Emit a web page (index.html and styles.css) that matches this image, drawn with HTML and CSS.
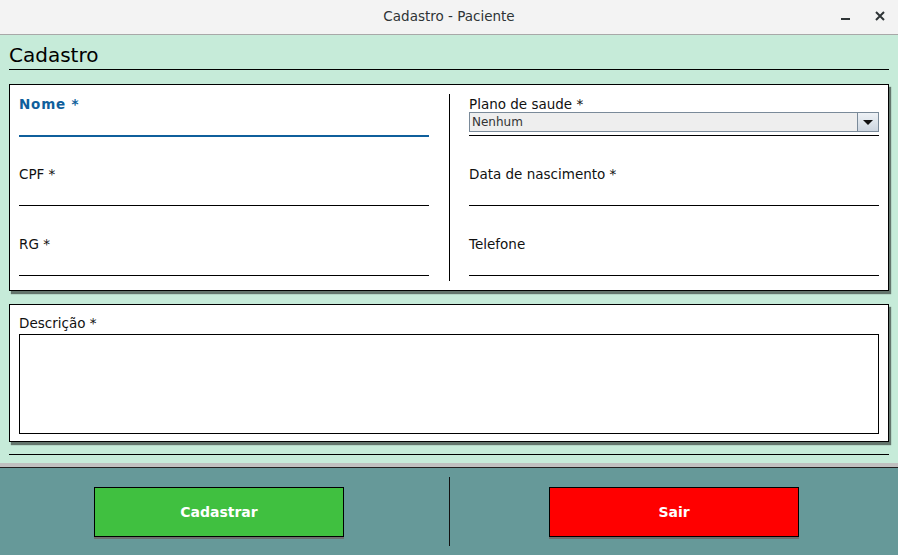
FILE: index.html
```html
<!DOCTYPE html>
<html lang="pt">
<head>
<meta charset="utf-8">
<title>Cadastro - Paciente</title>
<link rel="stylesheet" href="styles.css">
</head>
<body>
<div class="window">
  <header class="titlebar">
    <div class="tb-side"></div>
    <div class="tb-title">Cadastro - Paciente</div>
    <div class="tb-side tb-controls">
      <svg class="tb-btn" width="12" height="12" viewBox="0 0 12 12"><rect x="1" y="8" width="9" height="2" fill="#2e3436"/></svg>
      <svg class="tb-btn" width="12" height="12" viewBox="0 0 12 12"><path d="M2 2 L10 10 M10 2 L2 10" stroke="#2e3436" stroke-width="2" fill="none"/></svg>
    </div>
  </header>

  <main class="main">
    <h1 class="heading">Cadastro</h1>

    <section class="panel panel-fields">
      <div class="col">
        <div class="field">
          <div class="label label-focus">Nome *</div>
          <div class="input input-focus"></div>
        </div>
        <div class="field">
          <div class="label">CPF *</div>
          <div class="input"></div>
        </div>
        <div class="field">
          <div class="label">RG *</div>
          <div class="input"></div>
        </div>
      </div>
      <div class="vsep"></div>
      <div class="col">
        <div class="field">
          <div class="label">Plano de saude *</div>
          <div class="input input-combo">
            <div class="combo">
              <span class="combo-text">Nenhum</span>
              <span class="combo-arrow"><svg width="10" height="6" viewBox="0 0 10 6"><path d="M0 0 H10 L5 5 Z" fill="#111"/></svg></span>
            </div>
          </div>
        </div>
        <div class="field">
          <div class="label">Data de nascimento *</div>
          <div class="input"></div>
        </div>
        <div class="field">
          <div class="label">Telefone</div>
          <div class="input"></div>
        </div>
      </div>
    </section>

    <section class="panel panel-desc">
      <div class="label">Descrição *</div>
      <div class="textarea"></div>
    </section>

    <div class="hline"></div>
  </main>

  <footer class="footer">
    <button class="btn btn-green">Cadastrar</button>
    <div class="fsep"></div>
    <button class="btn btn-red">Sair</button>
  </footer>
</div>
</body>
</html>
```

FILE: styles.css
```css
* { box-sizing: border-box; }
html, body { margin: 0; padding: 0; }
body {
  width: 898px;
  height: 555px;
  overflow: hidden;
  font-family: "DejaVu Sans", sans-serif;
  color: #111;
  background: #669999;
}
.window { width: 898px; height: 555px; display: flex; flex-direction: column; }

.titlebar {
  height: 35px;
  background: #f3f3f3;
  border-bottom: 1px solid #a8a8a8;
  display: grid;
  grid-template-columns: 1fr auto 1fr;
  align-items: center;
}
.tb-title {
  font-size: 13.5px;
  color: #2e3436;
  padding-bottom: 2px;
}
.tb-controls {
  display: flex;
  justify-content: flex-end;
  gap: 22px;
  padding-right: 12px;
  padding-bottom: 2px;
}
.tb-btn { display: block; }

.main {
  background: #c6ebd9;
  padding: 8px 9px 8px 9px;
  border-bottom: 4px solid #c0c0c0;
}
.heading {
  margin: 0;
  font-weight: normal;
  font-size: 20px;
  line-height: 24px;
  padding-bottom: 2px;
  border-bottom: 1px solid #000;
  color: #000;
}

.panel {
  background: #fff;
  border: 1px solid #000;
  box-shadow: 2px 3px 1px rgba(0, 0, 0, 0.5);
}
.panel-fields {
  margin-top: 14px;
  display: flex;
  padding: 11px 9px 14px 9px;
}
.col { width: 410px; display: flex; flex-direction: column; gap: 30px; }
.vsep { width: 1px; background: #000; margin: -2px 19px -5px 20px; }

.label {
  font-size: 13.5px;
  line-height: 17px;
  height: 17px;
  white-space: nowrap;
}
.label-focus {
  color: #0f5f9c;
  font-weight: bold;
  letter-spacing: 0.8px;
}
.input {
  height: 23px;
  border-bottom: 1px solid #000;
}
.input-combo { display: flow-root; }
.input-focus {
  border-bottom-color: #0f5f9c;
  box-shadow: 0 1px 0 #0f5f9c;
}

.combo {
  margin-top: -1px;
  height: 20px;
  border: 1px solid #7a8a99;
  background: #eeeeee;
  display: flex;
  align-items: center;
}
.combo-text {
  flex: 1;
  font-size: 12px;
  color: #333;
  padding-left: 2px;
}
.combo-arrow {
  width: 21px;
  height: 100%;
  border-left: 1px solid #7a8a99;
  background: linear-gradient(#eef2f6, #cdd6e0);
  display: flex;
  align-items: center;
  justify-content: center;
}
.combo-arrow svg { display: block; margin-top: 1px; }

.panel-desc {
  margin-top: 13px;
  padding: 10px 9px 7px 9px;
}
.textarea {
  margin-top: 2px;
  height: 100px;
  border: 1px solid #000;
  background: #fff;
}

.hline {
  margin-top: 12px;
  height: 1px;
  background: #000;
}

.footer {
  flex: 1;
  border-top: 1px solid #222;
  background: #669999;
  display: flex;
  align-items: center;
  padding: 9px 0 9px 94px;
}
.btn {
  width: 250px;
  height: 50px;
  border: 1px solid #000;
  box-shadow: 0 2px 0 #6e6e6e;
  color: #fff;
  font-family: "DejaVu Sans", sans-serif;
  font-weight: bold;
  font-size: 14px;
  padding: 0;
  margin-top: 1px;
}
.btn-green { background: #40c040; }
.btn-red { background: #ff0000; }
.fsep {
  width: 1px;
  align-self: stretch;
  background: #111;
  margin: 0 99px 0 105px;
}
```
